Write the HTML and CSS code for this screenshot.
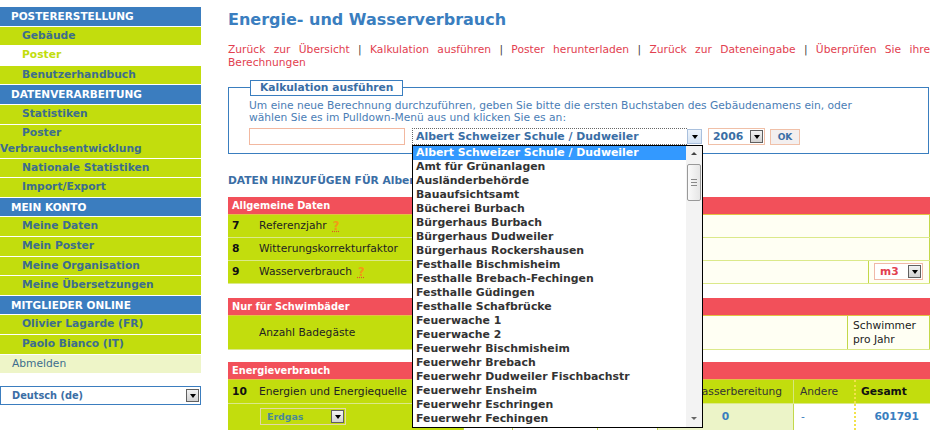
FILE: index.html
```
<!DOCTYPE html>
<html lang="de">
<head>
<meta charset="utf-8">
<title>Energie- und Wasserverbrauch</title>
<link rel="stylesheet" href="styles.css">
</head>
<body>
<div class="page">
  <nav class="sidebar">
    <div class="nav-head">POSTERERSTELLUNG</div>
    <a class="nav-item" href="#">Gebäude</a>
    <a class="nav-item current" href="#">Poster</a>
    <a class="nav-item" href="#">Benutzerhandbuch</a>
    <div class="nav-head">DATENVERARBEITUNG</div>
    <a class="nav-item" href="#">Statistiken</a>
    <a class="nav-item two-line" href="#">Poster<br>Verbrauchsentwicklung</a>
    <a class="nav-item" href="#">Nationale Statistiken</a>
    <a class="nav-item" href="#">Import/Export</a>
    <div class="nav-head">MEIN KONTO</div>
    <a class="nav-item" href="#">Meine Daten</a>
    <a class="nav-item" href="#">Mein Poster</a>
    <a class="nav-item" href="#">Meine Organisation</a>
    <a class="nav-item" href="#">Meine Übersetzungen</a>
    <div class="nav-head">MITGLIEDER ONLINE</div>
    <a class="nav-item" href="#">Olivier Lagarde (FR)</a>
    <a class="nav-item" href="#">Paolo Bianco (IT)</a>
    <a class="nav-plain" href="#">Abmelden</a>
    <div class="lang-select"><span>Deutsch (de)</span><span class="arrow-btn"></span></div>
  </nav>

  <main class="main">
    <h1 class="title">Energie- und Wasserverbrauch</h1>
    <p class="links"><a href="#">Zurück zur Übersicht</a> | <a href="#">Kalkulation ausführen</a> | <a href="#">Poster herunterladen</a> | <a href="#">Zurück zur Dateneingabe</a> | <a href="#">Überprüfen Sie ihre</a> <a href="#">Berechnungen</a></p>

    <fieldset class="calc">
      <legend>Kalkulation ausführen</legend>
      <p class="calc-text">Um eine neue Berechnung durchzuführen, geben Sie bitte die ersten Buchstaben des Gebäudenamens ein, oder<br>wählen Sie es im Pulldown-Menü aus und klicken Sie es an:</p>
      <div class="calc-controls">
        <input class="name-input" type="text">
        <div class="building-select">
          <span class="sel-focus">Albert Schweizer Schule / Dudweiler</span>
          <span class="arrow-btn light"></span>
          <div class="dropdown">
            <ul class="dd-list">
              <li class="selected">Albert Schweizer Schule / Dudweiler</li>
              <li>Amt für Grünanlagen</li>
              <li>Ausländerbehörde</li>
              <li>Bauaufsichtsamt</li>
              <li>Bücherei Burbach</li>
              <li>Bürgerhaus Burbach</li>
              <li>Bürgerhaus Dudweiler</li>
              <li>Bürgerhaus Rockershausen</li>
              <li>Festhalle Bischmisheim</li>
              <li>Festhalle Brebach-Fechingen</li>
              <li>Festhalle Güdingen</li>
              <li>Festhalle Schafbrücke</li>
              <li>Feuerwache 1</li>
              <li>Feuerwache 2</li>
              <li>Feuerwehr Bischmisheim</li>
              <li>Feuerwehr Brebach</li>
              <li>Feuerwehr Dudweiler Fischbachstr</li>
              <li>Feuerwehr Ensheim</li>
              <li>Feuerwehr Eschringen</li>
              <li>Feuerwehr Fechingen</li>
            </ul>
            <div class="scrollbar">
              <span class="sb-up"></span>
              <div class="sb-track"><span class="sb-thumb"><i></i><i></i><i></i></span></div>
              <span class="sb-down"></span>
            </div>
          </div>
        </div>
        <div class="year-select"><span>2006</span><span class="arrow-btn"></span></div>
        <button class="ok-btn" type="button">OK</button>
      </div>
    </fieldset>

    <h2 class="data-title">DATEN HINZUFÜGEN FÜR Albert Schweizer Schule / Dudweiler</h2>

    <section class="sec">
      <div class="sec-head">Allgemeine Daten</div>
      <div class="row">
        <span class="num">7</span>
        <span class="label">Referenzjahr <span class="help">?</span></span>
        <span class="cell span2"></span>
      </div>
      <div class="row">
        <span class="num">8</span>
        <span class="label">Witterungskorrekturfaktor</span>
        <span class="cell span2"></span>
      </div>
      <div class="row">
        <span class="num">9</span>
        <span class="label">Wasserverbrauch <span class="help">?</span></span>
        <span class="cell"></span>
        <span class="cell last unit-cell"><span class="unit-select"><span>m3</span><span class="arrow-btn"></span></span></span>
      </div>
    </section>

    <section class="sec sec-pool">
      <div class="sec-head">Nur für Schwimbäder</div>
      <div class="row tall">
        <span class="num"></span>
        <span class="label">Anzahl Badegäste</span>
        <span class="cell"></span>
        <span class="cell last note">Schwimmer<br>pro Jahr</span>
      </div>
    </section>

    <section class="sec">
      <div class="sec-head">Energieverbrauch</div>
      <div class="erow head">
        <span class="num">10</span>
        <span class="label">Energien und Energiequelle</span>
        <span class="ec"></span>
        <span class="ec"></span>
        <span class="ec"></span>
        <span class="ec">Warmwasserbereitung</span>
        <span class="ec sep">Andere</span>
        <span class="ec total">Gesamt</span>
      </div>
      <div class="erow data">
        <span class="num"></span>
        <span class="label"><span class="src-select"><span>Erdgas</span><span class="arrow-btn"></span></span></span>
        <span class="ec white"></span>
        <span class="ec white"></span>
        <span class="ec white"></span>
        <span class="ec pale val center">0</span>
        <span class="ec white val-plain">-</span>
        <span class="ec white total val right">601791</span>
      </div>
    </section>
  </main>
</div>
</body>
</html>
```
FILE: styles.css
```
html { overflow: hidden; }
body {
  margin: 0;
  background: #fff;
  font-family: "DejaVu Sans", Verdana, sans-serif;
  font-size: 10.7px;
  color: #222;
}
.page {
  display: flex;
  align-items: flex-start;
  padding-top: 7px;
}

/* ---------- sidebar ---------- */
.sidebar {
  width: 201px;
  flex: none;
}
.nav-head {
  background: #3b7dbf;
  color: #fff;
  font-weight: bold;
  font-size: 10.5px;
  line-height: 18.6px;
  padding-left: 11px;
  border-bottom: 1px solid #fff;
}
.nav-item {
  display: block;
  background: #c2dd0d;
  color: #3d6d8e;
  font-weight: bold;
  font-size: 10.7px;
  line-height: 18.6px;
  padding-left: 22px;
  border-bottom: 1px solid #fff;
  text-decoration: none;
  white-space: nowrap;
}
.nav-item.current {
  background: #fff;
  color: #c2dd0d;
}
.nav-item.two-line {
  padding-left: 0;
  text-indent: 22px;
  line-height: 16.5px;
}
.nav-plain {
  display: block;
  background: #eef5c8;
  color: #3d6d8e;
  font-size: 10.7px;
  line-height: 18.6px;
  padding-left: 12px;
  text-decoration: none;
}
.lang-select {
  margin-top: 13.4px;
  height: 17px;
  border: 1px solid #3b7dbf;
  display: flex;
  align-items: center;
  justify-content: space-between;
  padding: 0 1px 0 11px;
  font-weight: bold;
  font-size: 9.8px;
  color: #3b6ea5;
}

/* generic arrow button */
.arrow-btn {
  width: 13px;
  height: 13px;
  flex: none;
  box-sizing: border-box;
  border: 1px solid #606060;
  background: linear-gradient(#f2f2f2, #d2d2d2);
  display: flex;
  align-items: center;
  justify-content: center;
}
.arrow-btn::after {
  content: "";
  border-left: 3.5px solid transparent;
  border-right: 3.5px solid transparent;
  border-top: 4px solid #000;
  margin-top: 1px;
}
.arrow-btn.light {
  width: 15px;
  height: 15px;
  border-color: #a9c0dd;
  background: linear-gradient(#eef4fb, #d5e3f3);
}

/* ---------- main ---------- */
.main {
  margin-left: 27px;
  width: 702px;
  flex: none;
}
.title {
  margin: 3px 0 0;
  font-size: 16px;
  line-height: 20px;
  color: #3a7ebf;
  font-weight: bold;
}
.links {
  margin: 12.6px 0 0;
  font-size: 10.7px;
  line-height: 13.5px;
  text-align: justify;
  color: #444;
}
.links a {
  color: #e2404f;
  text-decoration: none;
}

.calc {
  margin: 10.4px 1px 0 0;
  border: 1px solid #3a7ebf;
  padding: 4px 20px 8px;
  min-width: 0;
}
.calc legend {
  margin-left: 1px;
  padding: 0 9px;
  border: 1px solid #3a7ebf;
  font-weight: bold;
  font-size: 10.7px;
  line-height: 14px;
  color: #3a6ea5;
}
.calc-text {
  margin: 0;
  font-size: 10.7px;
  line-height: 12px;
  color: #4a7db5;
  white-space: nowrap;
}
.calc-controls {
  display: flex;
  align-items: flex-start;
  margin-top: 4px;
  height: 17px;
}
.name-input {
  width: 156px;
  height: 17px;
  box-sizing: border-box;
  border: 1px solid #f2b8a0;
  margin: 0;
  padding: 0;
  background: #fff;
}
.building-select {
  position: relative;
  margin-left: 7px;
  width: 291px;
  height: 17px;
  display: flex;
  align-items: center;
  font-weight: bold;
  font-size: 10.9px;
  color: #3a6ea5;
}
.sel-focus {
  flex: 1;
  height: 17px;
  box-sizing: border-box;
  border: 1px dotted #666;
  border-right: none;
  padding-left: 3px;
  line-height: 15px;
  white-space: nowrap;
}
.building-select .arrow-btn {
  margin-right: 1px;
}
.year-select {
  margin-left: 5px;
  width: 57px;
  height: 17px;
  box-sizing: border-box;
  border: 1px solid #f0c0a8;
  display: flex;
  align-items: center;
  justify-content: space-between;
  padding: 0 1px 0 4px;
  font-weight: bold;
  font-size: 10.9px;
  color: #3a6ea5;
}
.ok-btn {
  margin: 1px 0 0 5px;
  width: 30px;
  height: 16px;
  padding: 0;
  border: 1px solid #f0c0a8;
  background: #f3efef;
  font-family: inherit;
  font-weight: bold;
  font-size: 9px;
  color: #3a6ea5;
}

/* open dropdown (overlay) */
.dropdown {
  position: absolute;
  top: 17px;
  left: 0;
  width: 291px;
  height: 283px;
  box-sizing: border-box;
  border: 1px solid #000;
  background: #fff;
  display: flex;
  z-index: 5;
}
.dd-list {
  list-style: none;
  margin: 0;
  padding: 0;
  flex: 1;
  font-weight: bold;
  font-size: 10.9px;
  line-height: 14px;
  color: #333;
}
.dd-list li {
  padding-left: 3px;
  white-space: nowrap;
}
.dd-list li.selected {
  background: #3399ff;
  color: #fff;
}
.scrollbar {
  width: 16px;
  flex: none;
  background: #f3f3f3;
  display: flex;
  flex-direction: column;
}
.sb-up, .sb-down {
  height: 16px;
  display: flex;
  align-items: center;
  justify-content: center;
}
.sb-up::after {
  content: "";
  border-left: 3px solid transparent;
  border-right: 3px solid transparent;
  border-bottom: 3px solid #444;
}
.sb-down::after {
  content: "";
  border-left: 3px solid transparent;
  border-right: 3px solid transparent;
  border-top: 3px solid #666;
}
.sb-track {
  flex: 1;
  padding-top: 2px;
}
.sb-thumb {
  display: flex;
  flex-direction: column;
  align-items: center;
  justify-content: center;
  gap: 2px;
  margin: 0 1px;
  height: 37px;
  box-sizing: border-box;
  border: 1px solid #999;
  border-radius: 2px;
  background: linear-gradient(90deg, #fafafa, #e6e6e6);
}
.sb-thumb i {
  display: block;
  width: 6px;
  height: 1px;
  background: #888;
}

.data-title {
  margin: 20px 0 9px;
  font-size: 10.7px;
  line-height: 14px;
  font-weight: bold;
  color: #3a6ea5;
  white-space: nowrap;
}

/* ---------- data sections ---------- */
.sec {
  margin-bottom: 14px;
}
.sec-pool {
  margin-bottom: 12px;
}
.sec-head {
  background: #f2505a;
  color: #fff;
  font-weight: bold;
  font-size: 9.8px;
  line-height: 17px;
  padding-left: 4px;
  border-bottom: 1px solid #e3c244;
}
.row {
  display: grid;
  grid-template-columns: 31px 204px 1fr 62px;
  height: 22px;
  background: #c2dd0d;
  border-bottom: 1px solid #dbe98a;
}
.row.tall {
  grid-template-columns: 31px 204px 1fr 83px;
  height: 33px;
}
.num {
  display: flex;
  align-items: center;
  padding-left: 4px;
  font-weight: bold;
  color: #111;
}
.label {
  display: flex;
  align-items: center;
  color: #222;
  white-space: nowrap;
}
.help {
  margin-left: 6px;
  font-size: 11.5px;
  color: #f29a16;
  font-weight: bold;
  text-decoration: underline dotted #e0502a;
}
.cell {
  background: #fffff3;
  border-left: 1px solid #c3d84a;
}
.cell.span2 {
  grid-column: 3 / 5;
  border-right: 1px solid #c3d84a;
}
.cell.last {
  border-right: 1px solid #c3d84a;
}
.unit-cell {
  display: flex;
  align-items: center;
  padding-left: 5px;
}
.unit-select {
  width: 49px;
  height: 17px;
  box-sizing: border-box;
  border: 1px solid #f0b8a8;
  background: #fff;
  display: flex;
  align-items: center;
  justify-content: space-between;
  padding: 0 1px 0 5px;
  font-weight: bold;
  color: #e2404f;
}
.note {
  padding: 3px 0 0 5px;
  line-height: 14px;
  color: #222;
}

.erow {
  display: grid;
  grid-template-columns: 31px 204px 49px 85px 60px 136px 61px 76px;
  background: #c2dd0d;
}
.erow.head {
  height: 23px;
  border-bottom: 1px solid #dbe98a;
}
.erow.head .label {
  grid-column: 2 / 3;
}
.erow.data {
  height: 26px;
}
.ec {
  display: flex;
  align-items: center;
  padding-left: 5px;
  color: #333;
  white-space: nowrap;
}
.erow.head .ec.sep {
  border-left: 1px solid #d6e77c;
  padding-left: 6px;
}
.ec.total {
  border-left: 2px dotted #f2e24a;
  font-weight: bold;
  color: #111;
}
.ec.white {
  background: #fff;
  border-left: 1px solid #c3d84a;
}
.ec.pale {
  background: #ecf4c8;
  border-left: 1px solid #c3d84a;
}
.ec.val {
  font-weight: bold;
  color: #3a7ebf;
}
.ec.val-plain {
  color: #3a7ebf;
  padding-left: 7px;
}
.ec.center {
  justify-content: center;
  padding-left: 0;
}
.ec.right {
  justify-content: flex-end;
  padding-right: 11px;
}
.ec.white.total {
  border-left: 2px dotted #f2e24a;
}
.src-select {
  margin-left: 1px;
  width: 86px;
  height: 17px;
  box-sizing: border-box;
  border: 1px solid #e3d8a8;
  display: flex;
  align-items: center;
  justify-content: space-between;
  padding: 0 1px 0 6px;
  font-weight: bold;
  font-size: 9.4px;
  color: #4a8a98;
}
```
